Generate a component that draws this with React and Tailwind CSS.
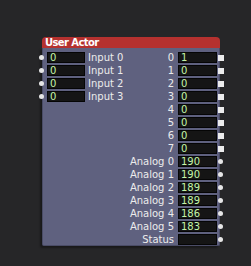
import React from "react";

const inputs = ["Input 0", "Input 1", "Input 2", "Input 3"];

const outputs = [
  { label: "0", value: "1", port: "square" },
  { label: "1", value: "0", port: "square" },
  { label: "2", value: "0", port: "square" },
  { label: "3", value: "0", port: "square" },
  { label: "4", value: "0", port: "square" },
  { label: "5", value: "0", port: "square" },
  { label: "6", value: "0", port: "square" },
  { label: "7", value: "0", port: "square" },
  { label: "Analog 0", value: "190", port: "dot" },
  { label: "Analog 1", value: "190", port: "dot" },
  { label: "Analog 2", value: "189", port: "dot" },
  { label: "Analog 3", value: "189", port: "dot" },
  { label: "Analog 4", value: "186", port: "dot" },
  { label: "Analog 5", value: "183", port: "dot" },
  { label: "Status", value: "", port: "dot" },
];

function ValueBox({ value, width }) {
  return (
    <div
      className={`h-[11px] ${width} bg-[#151515] border border-[#050505] text-[#c4f5a8] text-[10px] leading-[9px] pl-[2px] overflow-hidden`}
    >
      {value}
    </div>
  );
}

export default function App() {
  return (
    <div
      className="w-[251px] h-[266px] bg-[#262628] pt-[37px] pl-[42px] text-[10px] leading-[13px] text-[#ececec]"
      style={{ fontFamily: '"DejaVu Sans", sans-serif' }}
    >
      <div className="w-[178px]">
        <div className="h-[11px] bg-[#b5312f] rounded-t-[4px] pl-[3px] text-white font-bold text-[10px] leading-[11px] tracking-[-0.6px]">
          User Actor
        </div>
        <div className="h-[198px] bg-[#5f617f] border border-t-0 border-[#4a4c66] rounded-b-[2px] pt-[3px] flex shadow-[-2px_2px_2px_rgba(0,0,0,0.35)]">
          <div className="flex flex-col w-[89px]">
            {inputs.map((name) => (
              <div key={name} className="h-[13px] flex items-center">
                <div className="w-[5px] h-[5px] rounded-full bg-[#e6e6e6] -ml-[4px] mr-[3px]" />
                <ValueBox value="0" width="w-[38px]" />
                <span className="ml-[3px] whitespace-nowrap">{name}</span>
              </div>
            ))}
          </div>
          <div className="flex flex-col flex-1">
            {outputs.map((o) => (
              <div key={o.label} className="h-[13px] flex items-center justify-end">
                <span className="whitespace-nowrap mr-[4px]">{o.label}</span>
                <ValueBox value={o.value} width="w-[39px]" />
                {o.port === "square" ? (
                  <div className="w-[6px] h-[6px] bg-[#ececec] ml-[1px] -mr-[5px]" />
                ) : (
                  <div className="w-[5px] h-[5px] rounded-full bg-[#e6e6e6] ml-[1px] -mr-[4px]" />
                )}
              </div>
            ))}
          </div>
        </div>
      </div>
    </div>
  );
}
